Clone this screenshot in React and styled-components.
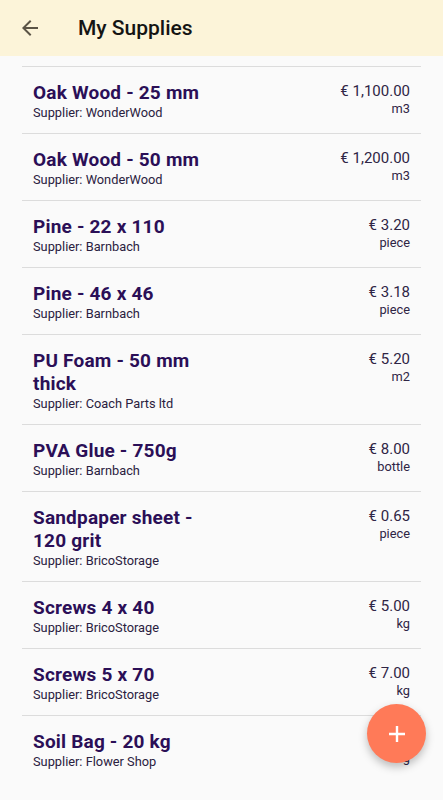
import styled, { createGlobalStyle } from "styled-components";

const supplies = [
  { name: "Oak Wood - 25 mm", supplier: "WonderWood", price: "€ 1,100.00", unit: "m3" },
  { name: "Oak Wood - 50 mm", supplier: "WonderWood", price: "€ 1,200.00", unit: "m3" },
  { name: "Pine - 22 x 110", supplier: "Barnbach", price: "€ 3.20", unit: "piece" },
  { name: "Pine - 46 x 46", supplier: "Barnbach", price: "€ 3.18", unit: "piece" },
  { name: "PU Foam - 50 mm thick", supplier: "Coach Parts ltd", price: "€ 5.20", unit: "m2" },
  { name: "PVA Glue - 750g", supplier: "Barnbach", price: "€ 8.00", unit: "bottle" },
  { name: "Sandpaper sheet - 120 grit", supplier: "BricoStorage", price: "€ 0.65", unit: "piece" },
  { name: "Screws 4 x 40", supplier: "BricoStorage", price: "€ 5.00", unit: "kg" },
  { name: "Screws 5 x 70", supplier: "BricoStorage", price: "€ 7.00", unit: "kg" },
  { name: "Soil Bag - 20 kg", supplier: "Flower Shop", price: "€ 2.50", unit: "kg" },
];

const GlobalStyle = createGlobalStyle`
  body {
    margin: 0;
    background: #fafafa;
    font-family: Roboto, "Liberation Sans", sans-serif;
    height: 800px;
    overflow: hidden;
  }
`;

function App() {
  return (
    <Page>
      <GlobalStyle />
      <TopBar>
        <BackButton>
          <svg width="24" height="24" viewBox="0 0 24 24">
            <path
              d="M20 11H7.83l5.59-5.59L12 4l-8 8 8 8 1.41-1.41L7.83 13H20v-2z"
              fill="#5b5446"
            />
          </svg>
        </BackButton>
        <Title>My Supplies</Title>
      </TopBar>
      <List>
        {supplies.map((s) => (
          <Row key={s.name}>
            <Info>
              <ItemName>{s.name}</ItemName>
              <Supplier>Supplier: {s.supplier}</Supplier>
            </Info>
            <PriceBox>
              <Price>{s.price}</Price>
              <Unit>{s.unit}</Unit>
            </PriceBox>
          </Row>
        ))}
      </List>
      <Fab>
        <svg width="20" height="20" viewBox="0 0 20 20">
          <path d="M10 2v16M2 10h16" stroke="#fff" strokeWidth="2.4" />
        </svg>
      </Fab>
    </Page>
  );
}

const Page = styled.div({
  width: "443px",
  height: "800px",
  background: "#fafafa",
  position: "relative",
  overflow: "hidden",
});

const TopBar = styled.div({
  height: "56px",
  background: "#fcf4d9",
  display: "flex",
  alignItems: "center",
});

const BackButton = styled.div({
  width: "24px",
  height: "24px",
  marginLeft: "18px",
  display: "flex",
});

const Title = styled.h1({
  margin: "0 0 0 36px",
  fontSize: "21px",
  fontWeight: 500,
  color: "#141414",
});

const List = styled.div({
  margin: "10px 22px 0",
  borderTop: "1px solid #dcdcdc",
});

const Row = styled.div({
  display: "flex",
  justifyContent: "space-between",
  alignItems: "flex-start",
  padding: "14px 11px 11px",
  borderBottom: "1px solid #dcdcdc",
  "&:last-child": {
    borderBottom: "none",
  },
});

const Info = styled.div({
  display: "flex",
  flexDirection: "column",
  maxWidth: "182px",
});

const ItemName = styled.div({
  fontSize: "19px",
  lineHeight: "23px",
  fontWeight: 700,
  letterSpacing: "0.2px",
  color: "#2b0f57",
  whiteSpace: "normal",
});

const Supplier = styled.div({
  fontSize: "12.8px",
  lineHeight: "18px",
  color: "#2a2140",
  whiteSpace: "nowrap",
});

const PriceBox = styled.div({
  display: "flex",
  flexDirection: "column",
  alignItems: "flex-end",
  paddingTop: "1px",
});

const Price = styled.div({
  fontSize: "15px",
  lineHeight: "18px",
  color: "#2f2545",
});

const Unit = styled.div({
  fontSize: "12.8px",
  lineHeight: "18px",
  color: "#2f2545",
});

const Fab = styled.div({
  position: "absolute",
  right: "17px",
  bottom: "37px",
  width: "59px",
  height: "59px",
  borderRadius: "50%",
  background: "#ff7a58",
  display: "flex",
  alignItems: "center",
  justifyContent: "center",
  boxShadow: "0 4px 8px rgba(0,0,0,0.25)",
});

export default App;
